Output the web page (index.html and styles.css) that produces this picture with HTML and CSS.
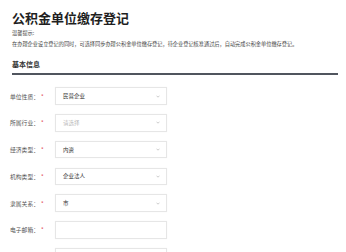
FILE: index.html
```html
<!DOCTYPE html>
<html lang="zh-CN">

<head>
    <meta charset="UTF-8">
    <meta name="viewport" content="width=device-width, initial-scale=1.0">
    <title>公积金单位缴存登记</title>
    <link rel="stylesheet" href="styles.css">
</head>

<body>
    <div class="page">
        <h1 class="title">公积金单位缴存登记</h1>
        <div class="tip">
            <p>温馨提示:</p>
            <p>在办理企业设立登记的同时，可选择同步办理公积金单位缴存登记，待企业登记核准通过后，自动完成公积金单位缴存登记。</p>
        </div>

        <h2 class="section-title">基本信息</h2>

        <form class="form">
            <div class="row">
                <label class="label">单位性质：<span class="star">*</span></label>
                <div class="select">
                    <span>民营企业</span>
                    <svg class="arrow" viewBox="0 0 4 3"><path d="M0.5 0.7 L2 2.2 L3.5 0.7" /></svg>
                </div>
            </div>
            <div class="row">
                <label class="label">所属行业：<span class="star">*</span></label>
                <div class="select">
                    <span class="placeholder">请选择</span>
                    <svg class="arrow" viewBox="0 0 4 3"><path d="M0.5 0.7 L2 2.2 L3.5 0.7" /></svg>
                </div>
            </div>
            <div class="row">
                <label class="label">经济类型：<span class="star">*</span></label>
                <div class="select">
                    <span>内资</span>
                    <svg class="arrow" viewBox="0 0 4 3"><path d="M0.5 0.7 L2 2.2 L3.5 0.7" /></svg>
                </div>
            </div>
            <div class="row">
                <label class="label">机构类型：<span class="star">*</span></label>
                <div class="select">
                    <span>企业法人</span>
                    <svg class="arrow" viewBox="0 0 4 3"><path d="M0.5 0.7 L2 2.2 L3.5 0.7" /></svg>
                </div>
            </div>
            <div class="row">
                <label class="label">隶属关系：<span class="star">*</span></label>
                <div class="select">
                    <span>市</span>
                    <svg class="arrow" viewBox="0 0 4 3"><path d="M0.5 0.7 L2 2.2 L3.5 0.7" /></svg>
                </div>
            </div>
            <div class="row">
                <label class="label">电子邮箱：<span class="star">*</span></label>
                <div class="select"></div>
            </div>
            <div class="row">
                <label class="label"></label>
                <div class="select"></div>
            </div>
        </form>
    </div>
</body>

</html>
```

FILE: styles.css
```css
/* General styles */

* {
    box-sizing: border-box;
}

body {
    margin: 0;
    background-color: #fff;
    font-family: "Noto Sans CJK SC", "Noto Sans", sans-serif;
    color: #333;
}

.page {
    padding: 11px 8px 0 10px;
}

.title {
    margin: 0 0 0 2px;
    font-size: 13px;
    line-height: 13px;
    font-weight: bold;
    color: #1f1f1f;
}

.tip {
    margin: 4.25px 0 0 2px;
    font-size: 5.2px;
    color: #444;
}

.tip p {
    margin: 0;
    line-height: 10.5px;
}

.section-title {
    margin: 10.5px 0 0 2px;
    padding-bottom: 4.5px;
    font-size: 7px;
    line-height: 9px;
    font-weight: bold;
    color: #333;
    border-bottom: 2px solid #50555e;
}

.form {
    display: flex;
    flex-direction: column;
    gap: 9.25px;
    margin-top: 12px;
}

.row {
    display: flex;
    align-items: center;
}

.label {
    width: 45px;
    font-size: 5.8px;
    color: #555;
}

.star {
    margin-left: 2px;
    color: #e0393e;
}

.select {
    display: flex;
    align-items: center;
    justify-content: space-between;
    width: 112px;
    height: 17.5px;
    padding: 0 7px;
    border: 1px solid #e6e6e6;
    box-shadow: 0 0 1px rgba(0, 0, 0, 0.06);
    font-size: 5.5px;
    color: #333;
}

.placeholder {
    color: #bbb;
}

.arrow {
    width: 4px;
    height: 3px;
    margin-right: -1px;
}

.arrow path {
    fill: none;
    stroke: #aaa;
    stroke-width: 0.6;
}
```
